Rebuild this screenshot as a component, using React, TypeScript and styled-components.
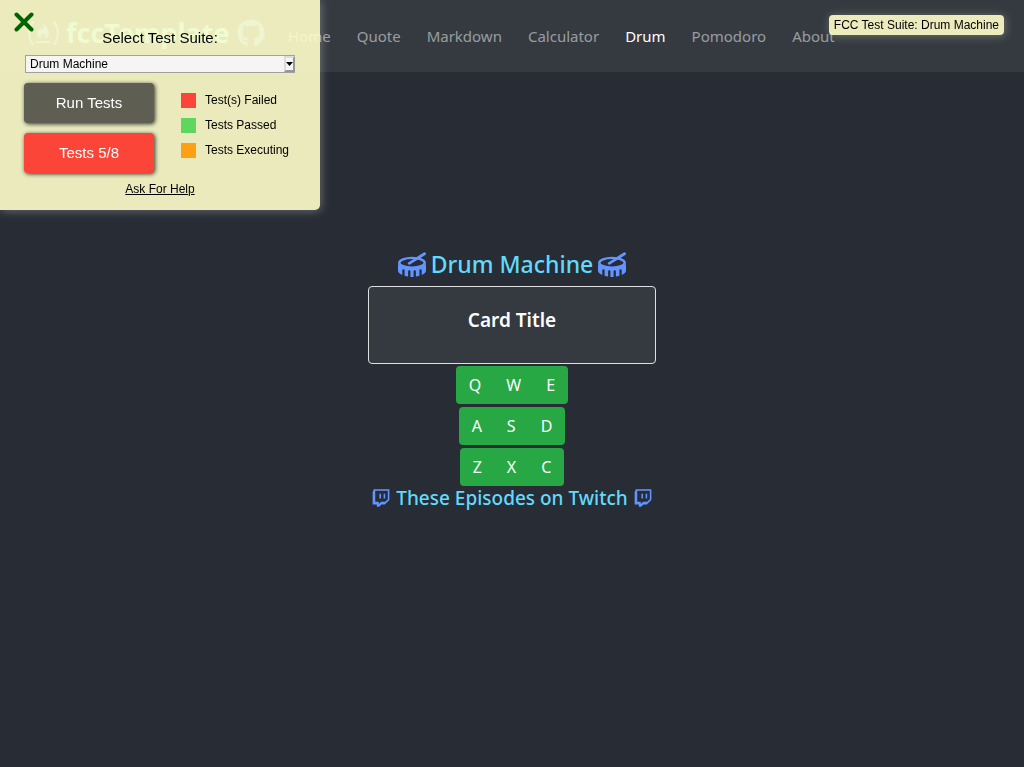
import React from "react";
import styled, { createGlobalStyle } from "styled-components";
import { FaGithub } from "react-icons/fa";

const GlobalStyle = createGlobalStyle`
  *, *::before, *::after { box-sizing: border-box; }
  body {
    margin: 0;
    background: #282c34;
    color: #fff;
    font-family: "Noto Sans", sans-serif;
    font-size: 16px;
    line-height: 24px;
  }
`;

const Navbar = styled.header`
  position: absolute;
  top: 0;
  left: 0;
  right: 0;
  display: flex;
  align-items: center;
  height: 72px;
  padding: 0 28px;
  background: #343a40;
`;

const Brand = styled.a`
  display: flex;
  align-items: center;
  gap: 7px;
  width: 248px;
  padding-bottom: 6px;
  color: #61dafb;
  font-size: 27px;
  font-weight: 700;
  line-height: 36px;
  text-decoration: none;

  svg {
    flex: none;
    color: #6495ff;
  }
`;

const NavLinks = styled.nav`
  display: flex;
  gap: 26px;
  padding-left: 12px;
`;

const NavLink = styled.a<{ $active?: boolean }>`
  color: ${(p) => (p.$active ? "#fff" : "rgba(255, 255, 255, 0.5)")};
  font-size: 15px;
  text-decoration: none;
`;

const Main = styled.main`
  display: flex;
  flex-direction: column;
  align-items: center;
  justify-content: center;
  min-height: 100vh;
`;

const Heading = styled.h1<{ $small?: boolean }>`
  display: flex;
  align-items: center;
  gap: ${(p) => (p.$small ? "6px" : "5px")};
  margin: 0 0 ${(p) => (p.$small ? "8px" : "6px")};
  color: #61dafb;
  font-size: ${(p) => (p.$small ? "19px" : "23px")};
  font-weight: 500;
  line-height: ${(p) => (p.$small ? "24px" : "31px")};

  svg {
    flex: none;
    color: #6495ff;
  }
`;

const Card = styled.section`
  width: 288px;
  max-width: 100%;
  padding: 21px 20px 31px;
  border: 1px solid #dfdfdf;
  border-radius: 4px;
  background: #343a40;
  text-align: center;
`;

const CardTitle = styled.h2`
  margin: 0;
  font-size: 19px;
  font-weight: 600;
  line-height: 24px;
`;

const Pads = styled.div`
  display: flex;
  flex-direction: column;
  align-items: center;
  gap: 3px;
  padding-top: 2px;
`;

const PadRow = styled.div`
  display: flex;
  border-radius: 4px;
  overflow: hidden;
`;

const Pad = styled.button`
  height: 38px;
  padding: 0 13px;
  border: 0;
  background: #28a745;
  color: #fff;
  font: inherit;

  & + & {
    margin-left: -1px;
  }
`;

const Panel = styled.aside`
  position: fixed;
  top: 0;
  left: 0;
  width: 320px;
  height: 210px;
  padding: 28px 24px 0;
  border-radius: 0 0 5px 0;
  background: rgba(255, 255, 204, 0.9);
  box-shadow: 1px 1px 10px rgba(255, 255, 255, 0.3);
  color: #000;
  font-family: "Liberation Sans", Arial, sans-serif;
  font-size: 12px;
`;

const CloseButton = styled.button`
  position: absolute;
  top: 8px;
  left: 10px;
  width: 28px;
  height: 28px;
  padding: 4px;
  border: 0;
  background: none;

  svg {
    display: block;
  }
`;

const SuiteLabel = styled.label`
  display: block;
  font-size: 15px;
  line-height: 20px;
  text-align: center;
`;

const SelectBox = styled.div`
  position: relative;
  margin: 7px 1px 10px;
`;

const SuiteSelect = styled.select`
  display: block;
  width: 100%;
  height: 18px;
  padding: 0 4px;
  border: 1px solid #a0a0a0;
  border-radius: 0;
  appearance: none;
  background: #f6f5f4;
  color: #000;
  font: inherit;
  line-height: 16px;
`;

const SelectArrow = styled.span`
  position: absolute;
  top: 1px;
  right: 0;
  display: flex;
  align-items: center;
  justify-content: center;
  width: 11px;
  height: 16px;
  border: 2px solid;
  border-color: #dcdcdc #969696 #969696 #dcdcdc;
  background: #f6f5f4;
  pointer-events: none;

  svg {
    flex: none;
  }
`;

const PanelBody = styled.div`
  display: flex;
  gap: 27px;
`;

const Actions = styled.div`
  display: flex;
  flex-direction: column;
  gap: 10px;
  width: 130px;
`;

const ActionButton = styled.button<{ $color: string }>`
  height: 40px;
  padding: 0;
  border: 0;
  border-radius: 4px;
  background: ${(p) => p.$color};
  box-shadow: 1px 1px 4px rgba(0, 0, 0, 0.8);
  color: #fff;
  font: inherit;
  font-size: 15px;
`;

const Legend = styled.ul`
  display: flex;
  flex-direction: column;
  gap: 10px;
  margin: 0;
  padding: 10px 0 0;
  list-style: none;
`;

const LegendItem = styled.li<{ $color: string }>`
  display: flex;
  align-items: center;
  gap: 9px;
  line-height: 15px;

  &::before {
    content: "";
    width: 15px;
    height: 15px;
    background: ${(p) => p.$color};
  }
`;

const HelpLink = styled.a`
  display: block;
  width: max-content;
  margin: 8px auto 0;
  color: #000;
  line-height: 16px;
`;

const SuiteBadge = styled.div`
  position: fixed;
  top: 15px;
  right: 20px;
  padding: 0 5px;
  border-radius: 4px;
  background: rgba(255, 255, 204, 0.9);
  box-shadow: 1px 1px 10px rgba(255, 255, 204, 0.3);
  color: #000;
  font-family: "Liberation Sans", Arial, sans-serif;
  font-size: 12px;
  line-height: 20px;
`;

const DrumIcon = () => (
  <svg width="28" height="25" viewBox="0 0 576 512" fill="none" stroke="currentColor" aria-hidden>
    <path
      d="M0 224V385C0 415 30 448 88 472V376C88 345 136 345 136 376V488Q170 498 208 503V400C208 369 256 369 256 400V511Q288 513 320 511V400C320 369 368 369 368 400V503Q406 498 440 488V376C440 345 488 345 488 376V472C546 448 576 415 576 385V224C560 290 450 330 288 330S16 290 0 224Z"
      fill="currentColor"
      stroke="none"
    />
    <ellipse cx="288" cy="220" rx="262" ry="100" strokeWidth="50" />
    <path d="M230 232L546 34" strokeWidth="58" strokeLinecap="round" />
  </svg>
);

const TwitchIcon = () => (
  <svg width="18" height="20" viewBox="0 0 448 512" fill="currentColor" aria-hidden>
    <path d="M40.1 32L10 108.9v314.3h107V480h60.2l56.8-56.8h87l117-117V32H40.1zm357.8 254.1L331 353H224l-56.8 56.8V353H76.9V72.1h321v214zM331 149v116.9h-40.1V149H331zm-107 0v116.9h-40.1V149H224z" />
  </svg>
);

const CampIcon = () => (
  <svg width="31" height="28" viewBox="0 0 31 28" fill="none" stroke="currentColor" strokeWidth="2" strokeLinecap="round" aria-hidden>
    <path d="M5 3C0 9 0 20 5 25M26 3C31 9 31 20 26 25M9 23H22" />
    <path
      d="M15 3C17 7 21 10 21 14C21 17 19 19 17 20C18 18 18 16 16 15C16 17 14 16 14 14C12 16 12 18 14 20C11 19 9 17 9 14C9 11 12 10 12 8C13 9 13 10 14 11C16 9 16 6 15 3Z"
      fill="currentColor"
      stroke="none"
    />
  </svg>
);

const links = ["Home", "Quote", "Markdown", "Calculator", "Drum", "Pomodoro", "About"];
const padRows = ["QWE", "ASD", "ZXC"];

export default function App() {
  return (
    <>
      <GlobalStyle />
      <Navbar>
        <Brand href="#home">
          <CampIcon />
          fccTemplate
          <FaGithub style={{ width: 28, height: 28 }} />
        </Brand>
        <NavLinks>
          {links.map((name) => (
            <NavLink key={name} href={`#${name.toLowerCase()}`} $active={name === "Drum"}>
              {name}
            </NavLink>
          ))}
        </NavLinks>
      </Navbar>
      <Main>
        <Heading>
          <DrumIcon />
          Drum Machine
          <DrumIcon />
        </Heading>
        <Card>
          <CardTitle>Card Title</CardTitle>
        </Card>
        <Pads>
          {padRows.map((row) => (
            <PadRow key={row}>
              {row.split("").map((letter) => (
                <Pad key={letter}>{letter}</Pad>
              ))}
            </PadRow>
          ))}
        </Pads>
        <Heading as="h2" $small>
          <TwitchIcon />
          These Episodes on Twitch
          <TwitchIcon />
        </Heading>
      </Main>
      <Panel>
        <CloseButton aria-label="Close">
          <svg width="20" height="20" viewBox="0 0 20 20" stroke="#006400" strokeWidth="4" strokeLinecap="round">
            <path d="M2.500 2.500L17.500 17.500M17.500 2.500L2.500 17.500" />
          </svg>
        </CloseButton>
        <SuiteLabel htmlFor="suite">Select Test Suite:</SuiteLabel>
        <SelectBox>
          <SuiteSelect id="suite">
            <option>Drum Machine</option>
          </SuiteSelect>
          <SelectArrow>
            <svg width="7" height="4" viewBox="0 0 7 4">
              <path d="M0 0h7L3.500 4z" />
            </svg>
          </SelectArrow>
        </SelectBox>
        <PanelBody>
          <Actions>
            <ActionButton $color="#5e5e52">Run Tests</ActionButton>
            <ActionButton $color="#fb4538">Tests 5/8</ActionButton>
          </Actions>
          <Legend>
            <LegendItem $color="#fb4538">Test(s) Failed</LegendItem>
            <LegendItem $color="#5fd75f">Tests Passed</LegendItem>
            <LegendItem $color="#ffa014">Tests Executing</LegendItem>
          </Legend>
        </PanelBody>
        <HelpLink href="#help">Ask For Help</HelpLink>
      </Panel>
      <SuiteBadge>FCC Test Suite: Drum Machine</SuiteBadge>
    </>
  );
}
